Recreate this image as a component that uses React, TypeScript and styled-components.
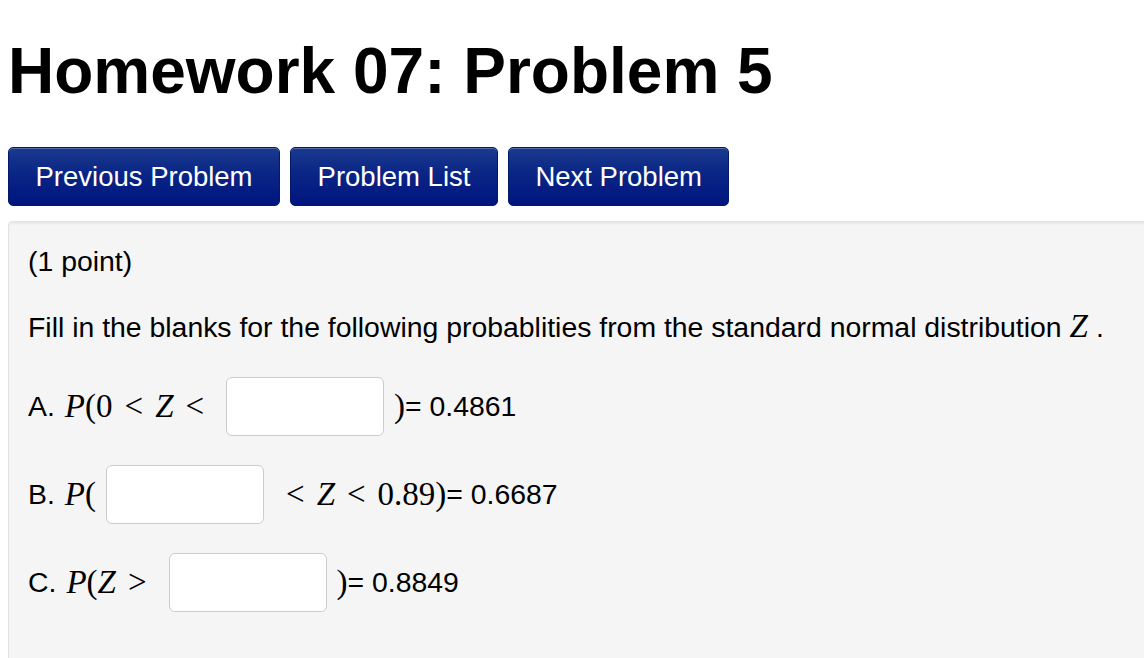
import React from "react";
import styled, { createGlobalStyle } from "styled-components";

const Global = createGlobalStyle`
  html, body { margin: 0; padding: 0; background: #fff; overflow: hidden; }
  body { font-family: "Liberation Sans", Arial, Helvetica, sans-serif; color: #000; }
`;

const Page = styled.div`
  padding: 0 0 0 8px;
  width: 1136px;
`;

const Title = styled.h1`
  margin: 35px 0 0;
  font-size: 64px;
  line-height: 72px;
  font-weight: 700;
`;

const Nav = styled.div`
  display: flex;
  gap: 10px;
  margin-top: 40px;
`;

const NavButton = styled.button`
  height: 59px;
  padding: 0 26.5px;
  font-family: "Liberation Sans", Arial, sans-serif;
  font-size: 27.5px;
  color: #fff;
  background: linear-gradient(#1a3a8e 0%, #0a2585 45%, #00157f 100%);
  border: 1px solid #041a66;
  border-radius: 5px;
  box-shadow: inset 0 1px 0 rgba(255, 255, 255, 0.25);
  cursor: pointer;
`;

const Panel = styled.div`
  margin-top: 15px;
  width: 1180px;
  min-height: 420px;
  box-sizing: border-box;
  padding: 24px 19px;
  background: #f5f5f5;
  border: 1px solid #e3e3e3;
  border-radius: 4px;
  box-shadow: inset 0 2px 2px rgba(0, 0, 0, 0.05);
`;

const Para = styled.p`
  margin: 0 0 34px;
  font-size: 28.4px;
  line-height: 31px;
`;

const Row = styled.div`
  display: flex;
  align-items: center;
  margin-bottom: 29px;
  font-size: 28.4px;
`;

const Math = styled.span<{ $gap?: number }>`
  font-family: "Liberation Serif", "Times New Roman", serif;
  font-size: 33px;
  line-height: 31px;
  white-space: pre;
  margin-right: ${(p) => p.$gap ?? 0}px;
`;

const V = styled.i`
  font-style: italic;
`;

const Rel = styled.span`
  margin: 0 12px;
`;

const Blank = styled.input`
  width: 158px;
  height: 59px;
  box-sizing: border-box;
  margin: 0 10px;
  background: #fff;
  border: 1px solid #cccccc;
  border-radius: 6px;
  font-size: 22px;
  padding: 0 8px;
  outline: none;
`;

const Label = styled.span`
  margin-right: 10px;
`;

export default function App() {
  return (
    <>
      <Global />
      <Page>
        <Title>Homework 07: Problem 5</Title>
        <Nav>
          <NavButton>Previous Problem</NavButton>
          <NavButton>Problem List</NavButton>
          <NavButton>Next Problem</NavButton>
        </Nav>
        <Panel>
          <Para>(1 point)</Para>
          <Para>
            Fill in the blanks for the following probablities from the standard normal distribution{" "}
            <Math $gap={8}>
              <V>Z</V>
            </Math>
            .
          </Para>
          <Row>
            <Label>A.</Label>
            <Math>
              <V>P</V>(0<Rel>&lt;</Rel>
              <V>Z</V>
              <Rel>&lt;</Rel>
            </Math>
            <Blank type="text" />
            <Math>)</Math>= 0.4861
          </Row>
          <Row>
            <Label>B.</Label>
            <Math>
              <V>P</V>(
            </Math>
            <Blank type="text" />
            <Math>
              <Rel>&lt;</Rel>
              <V>Z</V>
              <Rel>&lt;</Rel>0.89)
            </Math>
            = 0.6687
          </Row>
          <Row>
            <Label>C.</Label>
            <Math>
              <V>P</V>(<V>Z</V>
              <Rel>&gt;</Rel>
            </Math>
            <Blank type="text" />
            <Math>)</Math>= 0.8849
          </Row>
        </Panel>
      </Page>
    </>
  );
}
